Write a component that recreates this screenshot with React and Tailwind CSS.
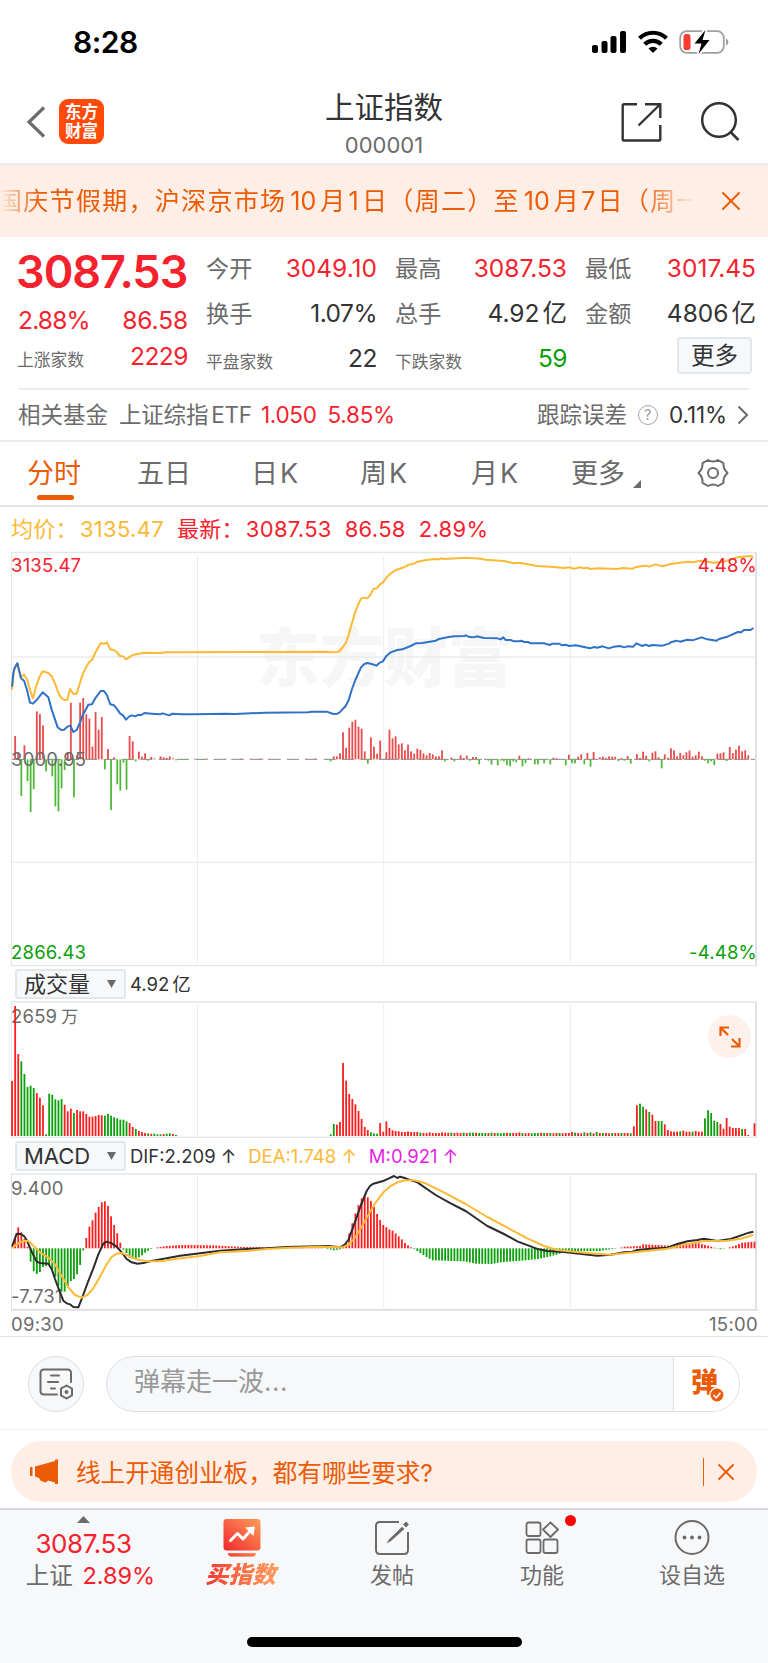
import { X } from 'lucide-react'

const UP = '#fa1e1e'
const DOWN = '#0aa00a'

// minute bars: positive = red, negative = green (units are a third of a pixel)
const MOMENTUM = [
  0, 70, 20, -110, 42, -65, -158, -90, 144, 136, 102, -36, 0, -51, -141, -156, -87, -32, 20, 170,
  -114, 12, 170, 184, 135, 122, 38, 142, 89, 127, -30, 31, -152, 6, -75, -94, -10, -91, 70, 54,
  -6, 23, 8, 18, -4, 7, 3, 0, 9, 6, 4, 9, 3, -3, 0, -2, -2, 0, 0, 2,
  0, 0, -2, 2, 0, 0, 0, 0, 0, 2, 0, -2, 0, 0, 2, 0, 0, 2, 0, 0,
  2, 2, 0, 2, 0, 0, -2, 0, 0, 0, -2, 0, 0, 0, 0, 2, 0, 0, 2, 0,
  0, 0, -2, -6, 9, 9, 18, 81, 35, 95, 113, 119, 98, 92, 24, -13, 66, 38, 17, 56,
  0, 21, 89, 63, 69, 45, 48, 27, 44, 24, 17, 32, 28, 18, 12, 19, 15, 9, 9, 27,
  -6, 0, 5, -6, 0, 12, 4, 11, -4, 7, 7, -15, 0, 0, -4, -16, 0, -18, -4, -6,
  -18, -21, -6, -9, 11, -21, -12, 3, 0, -15, -15, 0, -12, 0, -15, 5, 3, 0, 0, -18,
  14, -12, -12, 8, 15, -15, 19, -22, 22, 0, 6, 8, 4, 9, 8, 8, -5, 3, -4, 10,
  -13, 0, 16, 4, 23, 11, -6, 20, 24, 6, -27, 15, 5, 33, 27, 9, 19, 12, 21, 26,
  8, 12, 23, 9, -4, -12, -6, -17, 17, 18, 21, -5, 37, 19, 29, 41, 24, 27, 12, 0,
]

const VOLUME_OPEN = [
  165, 390, 246, -224, -186, -147, -151, -144, 129, 115, 92, -5, -127, -124, -110, -107, -111, 94, 74, 82,
  -69, 78, 74, 74, 66, 58, 58, 60, 63, 62, -61, -66, -61, -56, -53, -49, -49, -44, 39, 27,
  -21, 15, 12, 9, -8, 7, -7, -5, -5, 6, -7, -8, 6, -3,
]
const VOLUME_NOON = [
  -5, -36, 34, 42, 219, 166, 126, 111, 95, 75, 51, 27, 18, -11, -8, -7, 39, 13, 44, 24,
  17, 15, 14, 12, 12, 14, 12, 12, 12, -10, 9, 9, 11, 9, 9, 9, 11, 10, 10, -10,
  9, 10, 9, -10, 9, -10, -10, 10, -9, -9, -9, 9, -10, 9, -9, -8, -9, 10, -9, 9,
  9, 11, -9, 8, 9, -8, -9, -9, 10, -9, 9, -9, 8, 9, -9, 8, 9, 9, 12, -10,
  9, 8, -11, 9, -11, 8, -12, 9, -9, 9, 8, -9, 9, 9, -9, 9, 9, -8,
]
const VOLUME_CLOSE = [
  29, 92, -97, -88, 80, -72, 64, 45, -45, -45, 35, 18, 14, 13, 13, -14, 16, 13, 13, -13,
  15, 13, 13, -53, -77, -69, -46, -42, 36, 22, 54, 28, 24, 24, 24, -21, 21, 3, 0, 38,
]
const VOLUME = [
  ...VOLUME_OPEN,
  ...Array(103 - VOLUME_OPEN.length).fill(0),
  ...VOLUME_NOON,
  ...VOLUME_CLOSE,
]

const MACD_KEYS = [
  [0, 0], [1, 30], [2, 63], [3, 48], [4, 28], [5, 5], [6, -40], [7, -69], [8, -77], [9, -71], [10, -56], [12, -50],
  [13, -62], [14, -85], [15, -112], [16, -130], [17, -130], [18, -115], [19, -98], [20, -92], [21, -78],
  [22, -50], [23, -6], [24, 31], [25, 65], [26, 84], [27, 107], [28, 124], [29, 138], [30, 141], [31, 127],
  [32, 96], [33, 70], [34, 45], [35, 17], [36, -4], [37, -14], [38, -28], [39, -31], [41, -27], [42, -21],
  [43, -13], [45, -2], [46, 0], [47, 3], [50, 7], [55, 10], [65, 9], [75, 4], [100, 3], [102, -2], [104, -6],
  [106, -3], [107, 5], [108, 18], [109, 45], [110, 75], [111, 105], [112, 130], [113, 150], [114, 155],
  [115, 153], [116, 142], [117, 124], [118, 103], [119, 85], [120, 70], [122, 57], [123, 53], [124, 45],
  [125, 36], [126, 27], [127, 16], [128, 9], [129, 3], [130, -2], [132, -14], [134, -26], [136, -36],
  [146, -39], [150, -46], [155, -47], [158, -42], [166, -36], [170, -32], [174, -24], [178, -14], [181, -10],
  [185, -8], [190, -8], [193, -3], [196, 0], [198, 5], [203, 7], [204, 12], [213, 8], [216, 16], [222, 15],
  [225, 8], [228, -1], [229, -3], [231, 0], [234, 9], [236, 17], [240, 20],
]

function spread(keys) {
  const out = []
  for (let k = 0; k < keys.length - 1; k++) {
    const [a, va] = keys[k]
    const [b, vb] = keys[k + 1]
    for (let i = a; i < b; i++) out.push(va + ((vb - va) * (i - a)) / (b - a))
  }
  return out.concat(keys[keys.length - 1][1])
}
const MACD = spread(MACD_KEYS)

const AVG_LINE = '36,570 42,510 52,490 62,530 72,524 82,540 90,570 99,595 108,560 118,532 128,514 145,519 156,530 166,553 175,578 184,594 193,600 202,599 210,567 220,582 230,581 238,555 248,523 258,502 267,487 276,480 285,460 302,430 314,431 321,427 331,448 341,450 350,456 360,468 369,469 378,478 398,465 412,462 432,458 480,459 500,457 980,455 990,457 1010,456 1018,454 1037,430 1046,405 1055,373 1066,335 1074,315 1083,296 1092,293 1102,295 1111,285 1120,267 1130,265 1139,254 1148,248 1160,232 1172,220 1188,210 1214,201 1226,194 1242,191 1250,186 1274,181 1302,177 1316,178 1322,175 1332,177 1397,173 1442,176 1457,179 1512,183 1542,190 1557,188 1612,198 1652,200 1692,204 1707,202 1722,206 1742,202 1752,205 1762,203 1770,207 1792,205 1852,207 1867,204 1897,206 1912,200 1937,197 1947,200 1967,193 1987,199 2012,192 2062,185 2077,187 2102,182 2142,188 2172,185 2212,172 2252,168 2260,171'
const PRICE_LINE = '36,560 40,520 44,503 52,490 63,535 72,542 81,570 90,608 99,611 110,600 128,577 145,592 156,632 173,682 184,690 192,689 202,680 211,677 220,696 230,690 240,668 247,648 265,614 276,613 285,596 302,573 312,573 321,586 331,613 342,616 352,628 360,640 369,646 378,659 387,650 396,646 405,649 414,645 424,645 433,639 455,641 480,643 488,640 508,646 517,641 545,643 580,643 680,641 705,642 795,638 925,637 935,635 980,635 1000,642 1012,641 1018,638 1037,618 1046,600 1055,570 1066,540 1083,502 1093,492 1102,489 1115,492 1129,497 1139,488 1148,485 1160,467 1172,457 1192,450 1207,448 1232,438 1247,430 1267,429 1307,422 1317,417 1342,412 1362,409 1392,408 1398,406 1407,411 1422,412 1430,409 1452,414 1492,415 1502,418 1510,412 1517,420 1532,420 1542,424 1557,424 1564,422 1572,426 1584,426 1592,430 1632,430 1649,435 1657,431 1677,431 1687,436 1697,434 1707,438 1727,436 1752,441 1770,445 1782,441 1792,443 1807,439 1827,445 1842,440 1860,438 1872,442 1882,439 1900,440 1909,430 1927,438 1937,434 1947,438 1957,435 1987,437 2007,431 2012,427 2030,422 2040,425 2062,419 2077,421 2105,412 2122,418 2150,422 2157,417 2182,410 2214,396 2224,397 2232,390 2252,390 2260,384'
const DIF_LINE = '36,335 50,296 62,297 72,303 80,315 95,350 110,380 120,384 145,386 155,402 165,432 180,472 190,497 200,505 210,508 220,516 235,517 245,492 265,438 280,400 295,358 310,326 320,320 335,325 350,335 365,352 380,372 395,382 412,386 430,384 450,379 500,370 540,362 600,355 660,347 740,342 800,340 860,336 950,334 985,333 1020,337 1033,330 1045,315 1060,275 1083,210 1100,168 1110,153 1120,146 1152,137 1167,130 1182,123 1192,129 1200,125 1217,130 1252,142 1307,180 1352,205 1397,228 1462,273 1512,297 1552,319 1592,334 1612,342 1642,348 1692,351 1752,358 1792,362 1832,359 1872,352 1897,350 1912,345 1952,341 2002,338 2032,327 2062,319 2092,315 2112,311 2152,318 2192,312 2232,298 2247,293 2260,290'
const DEA_LINE = '36,340 50,328 70,317 85,318 100,332 120,352 145,368 165,388 185,423 205,457 225,480 245,488 262,480 280,460 300,425 320,388 335,366 350,356 365,354 385,362 410,373 440,379 480,379 520,373 600,363 660,352 740,348 800,342 870,338 960,335 1025,337 1045,330 1065,308 1085,275 1105,240 1125,205 1152,170 1172,153 1197,140 1217,136 1242,136 1277,145 1327,170 1397,207 1462,246 1522,278 1582,310 1632,333 1672,345 1722,350 1772,355 1832,359 1872,355 1912,351 2002,341 2052,329 2112,318 2182,317 2222,311 2260,300'

function Bars({ data, base, up = UP, down = DOWN, mirrored = true }) {
  return data.map((v, i) =>
    v ? (
      <rect
        key={i}
        x={33.5 + 9.28 * i}
        y={v > 0 || !mirrored ? base - Math.abs(v) : base}
        width="5.4"
        height={Math.abs(v)}
        fill={v > 0 ? up : down}
      />
    ) : null
  )
}

function Frame({ top, bottom }) {
  return (
    <g stroke="#e3e7eb" strokeWidth="3">
      <path d={`M592.5 ${top + 8}V${bottom - 5}M1151 ${top + 8}V${bottom - 5}M1711 ${top + 8}V${bottom - 5}`} stroke="#eaedf0" />
      <path d={`M34.5 ${top}V${bottom}`} />
      <path d={`M33 ${top}H2270M33 ${bottom}H2270`} strokeWidth="4" />
      <path d={`M2268 ${top}V${bottom}`} strokeWidth="6" stroke="#dfe3e8" />
    </g>
  )
}

function StatusBar() {
  return (
    <div className="h-[80px] flex items-center justify-between pl-[73px] pr-[39px] pt-[4px]">
      <span className="text-[30px] leading-none font-semibold tracking-[-0.5px] text-black">8:28</span>
      <svg width="138" height="26" viewBox="0 0 138 26">
        <rect x="1" y="16" width="6" height="8" rx="2" />
        <rect x="10.5" y="12" width="6" height="12" rx="2" />
        <rect x="19.5" y="7" width="6" height="17" rx="2" />
        <rect x="29" y="2" width="6" height="22" rx="2" />
        <g fill="none" stroke="#000" strokeWidth="4.2">
          <path d="M48.5 9.2a19.5 19.5 0 0 1 27 0" />
          <path d="M53.7 15.2a12 12 0 0 1 16.6 0" />
        </g>
        <path d="M57.5 19.5a7 7 0 0 1 9 0L62 24Z" />
        <rect x="89.2" y="2.2" width="43.6" height="21.6" rx="6.5" fill="none" stroke="#a0a0a0" strokeWidth="1.8" />
        <path d="M135 9.5v7q2.5-1 2.5-3.5t-2.5-3.5" fill="#a0a0a0" />
        <rect x="92.5" y="5" width="7" height="16" rx="2.8" fill="#ff3b30" />
        <path d="M114.5 0.5L103.5 14.5H110.5L107.5 25.5L118.5 11H111.5Z" stroke="#fff" strokeWidth="3.5" />
        <path d="M114.5 1L103.5 14.5H110.5L107.5 25L118.5 11H111.5Z" />
      </svg>
    </div>
  )
}

function Header() {
  return (
    <div className="h-[85px] border-b-2 border-[#e9ecee] flex items-start justify-between px-[26px]">
      <div className="flex items-center gap-[13px] pt-[19px] w-[140px]">
        <svg width="20" height="32" viewBox="0 0 20 32" fill="none" stroke="#6b6b6b" strokeWidth="3.2">
          <path d="M18 1.5L3 16L18 30.5" />
        </svg>
        <div className="w-[45px] h-[45px] rounded-[9px] bg-[#ff4a0a] text-white text-[16.5px] leading-[18.5px] font-bold flex flex-col items-center justify-center">
          <span>东方</span>
          <span>财富</span>
        </div>
      </div>
      <div className="text-center pt-[8px]">
        <div className="text-[29.5px] leading-[38px] text-[#333]">上证指数</div>
        <div className="text-[22px] leading-[38px] text-[#6b6b6b]">000001</div>
      </div>
      <div className="w-[140px] flex justify-end gap-[39px] pr-px pt-[21px]">
        <svg width="42" height="42" viewBox="0 0 42 42" fill="none" stroke="#333" strokeWidth="2.4">
          <path d="M17 3.2H4Q2.7 3.2 2.7 4.5V38.2Q2.7 39.5 4 39.5H39Q40.300 39.5 40.3 38.2V24" />
          <path d="M25 3.2H40.3V17M40 3.5L18.5 24.5" />
        </svg>
        <svg width="40" height="42" viewBox="0 0 40 42" fill="none" stroke="#333" strokeWidth="2.5">
          <circle cx="18" cy="19" r="16.8" />
          <path d="M29.5 31L37.5 39" />
        </svg>
      </div>
    </div>
  )
}

function Notice() {
  return (
    <div className="h-[72px] bg-[#feeee5] flex items-center justify-between text-[#ec5b06]">
      <div className="w-[694px] overflow-hidden pt-[2px] [mask-image:linear-gradient(to_right,transparent,black_40px,black_640px,transparent)]">
        <div className="ml-[-3px] text-[25px] tracking-[1.3px] whitespace-nowrap">
          国庆节假期，沪深京市场<span className="tracking-normal ml-[4px] mr-[4px]">10</span>月<span className="mx-[2px]">1</span>日（周二）至
          <span className="tracking-normal ml-[4px] mr-[4px]">10</span>月<span className="mx-px">7</span>日（周一）
        </div>
      </div>
      <X className="w-[32px] h-[32px] mr-[21px]" strokeWidth={1.5} />
    </div>
  )
}

function Cell({ label, value, small, color = 'text-[#333]' }) {
  const decimal = value.includes('.') && !value.includes('%')
  return (
    <div className="h-[45px] flex items-center justify-between whitespace-nowrap">
      <span className={`ml-[-1px] text-[#6b6b6b] ${small ? 'text-[16.8px] pt-[8px]' : 'text-[23.2px] pt-px'}`}>{label}</span>
      <span className={`text-[24.5px] ${decimal || value.includes('亿') ? 'tracking-normal' : 'tracking-[-0.5px]'} ${color}`}>
        {value.replace('亿', '')}
        {value.includes('亿') && <span className="ml-[3px]">亿</span>}
      </span>
    </div>
  )
}

function Quote() {
  return (
    <div className="h-[205px] border-b-2 border-[#e9ecee] pl-[18px] pr-[13px]">
      <div className="h-[151px] grid grid-cols-[170px_170px_171px_170px] gap-x-[19px]">
        <div className="text-[#f5222d] whitespace-nowrap">
          <div className="ml-[-2px] h-[70px] flex items-center text-[45px] font-semibold tracking-[-1px]">3087.53</div>
          <div className="h-[27px] flex items-center justify-between text-[24.5px] tracking-[-0.8px]">
            <span>2.88%</span>
            <span className="tracking-[-0.1px]">86.58</span>
          </div>
          <Cell label="上涨家数" value="2229" small color="text-[#f5222d]" />
        </div>
        <div className="pt-[9px]">
          <Cell label="今开" value="3049.10" color="text-[#f5222d]" />
          <Cell label="换手" value="1.07%" />
          <Cell label="平盘家数" value="22" small />
        </div>
        <div className="pt-[9px]">
          <Cell label="最高" value="3087.53" color="text-[#f5222d]" />
          <Cell label="总手" value="4.92亿" />
          <Cell label="下跌家数" value="59" small color="text-[#0aa00a]" />
        </div>
        <div className="pt-[9px]">
          <Cell label="最低" value="3017.45" color="text-[#f5222d]" />
          <Cell label="金额" value="4806亿" />
          <div className="flex justify-end pr-[4px] pt-px">
            <div className="w-[75px] h-[37px] rounded-[4px] border-2 border-[#e3e7eb] bg-[#f6f8fa] text-[23.5px] leading-[34px] text-center text-[#333]">更多</div>
          </div>
        </div>
      </div>
      <div className="h-[52px] border-t-2 border-[#eceff1] mr-[6px] flex items-center text-[22.5px] text-[#6b6b6b] whitespace-nowrap">
        <span>相关基金</span>
        <span className="ml-[11px] tracking-[-0.2px]">上证综指<span className="ml-[3px]">ETF</span></span>
        <span className="ml-[9px] tracking-[-0.3px] text-[#f5222d]">1.050</span>
        <span className="ml-[11px] tracking-[-0.3px] text-[#f5222d]">5.85%</span>
        <span className="ml-auto">跟踪误差</span>
        <span className="ml-[11px] w-[20px] h-[20px] rounded-full border border-[#a5a5a5] text-[14px] leading-[18px] text-center text-[#999]">?</span>
        <span className="ml-[11px] tracking-[-0.100px] text-[#333]">0.11%</span>
        <svg className="ml-[10px]" width="12" height="20" viewBox="0 0 12 20" fill="none" stroke="#6b6b6b" strokeWidth="2">
          <path d="M1.5 1.5L10 10L1.5 18.5" />
        </svg>
      </div>
    </div>
  )
}

function Tabs() {
  return (
    <div className="h-[65px] border-b-2 border-[#e1e5e9] flex items-start pl-[27px] text-[27px] leading-[64px] text-[#6b6b6b] whitespace-nowrap">
      <div className="w-[110px] text-[#ec5b06]">
        <div className="h-[53px]">分时</div>
        <div className="ml-[10px] w-[37px] h-[5px] rounded-full bg-[#ec5b06]" />
      </div>
      <div className="w-[114px]">五日</div>
      <div className="w-[109px]">日<span className="ml-[2px]">K</span></div>
      <div className="w-[111px]">周<span className="ml-[2px]">K</span></div>
      <div className="w-[100px]">月<span className="ml-[2px]">K</span></div>
      <div className="w-[126px] flex">
        更多
        <svg className="ml-[8px] mt-[38px]" width="8" height="8" viewBox="0 0 8 8" fill="#6b6b6b">
          <path d="M8 0V8H0Z" />
        </svg>
      </div>
      <svg className="mt-[16px]" width="32" height="30" viewBox="0 0 32 30" fill="none" stroke="#6b6b6b" strokeWidth="2" strokeLinejoin="round">
        <path d="M11 2Q16 5 21 2L26.500 5.2Q26 11 30.5 15Q26 19 26.5 24.8L21 28Q16 25 11 28L5.5 24.8Q6 19 1.5 15Q6 11 5.5 5.2Z" />
        <circle cx="16" cy="15" r="5" />
      </svg>
    </div>
  )
}

function PriceChart() {
  return (
    <div className="relative h-[416px]">
      <div className="absolute left-[256px] top-[61px] text-[64px] leading-[92px] font-black text-[#f6f6f6]">东方财富</div>
      <svg className="absolute left-0 top-0" width="768" height="416" viewBox="0 153 2304 1248" fill="none">
        <Frame top={157.5} bottom={1397} />
        <path d="M36 471H2265M36 1087H2265" stroke="#e9ecef" strokeWidth="4" />
        <path d="M36 778H1152" stroke="#8a8a8a" strokeWidth="3" strokeDasharray="36 19" />
        <path d="M1152 778H2265" stroke="#8a8a8a" strokeWidth="3" strokeDasharray="44 6" />
        <Bars data={MOMENTUM} base={778} up="#e84c4c" down="#52b83c" />
        <polyline points={AVG_LINE} stroke="#fcb935" strokeWidth="6" strokeLinejoin="round" />
        <polyline points={PRICE_LINE} stroke="#2f72c8" strokeWidth="6" strokeLinejoin="round" />
      </svg>
      <div className="absolute left-[11px] right-[11px] inset-y-0 text-[18.5px] leading-[24px] tracking-[0.2px]">
        <div className="flex justify-between pt-[2px] text-[#f5222d]">
          <span>3135.47</span>
          <span>4.48%</span>
        </div>
        <div className="pt-[170px] text-[#6b6b6b]">3000.95</div>
        <div className="flex justify-between pt-[169px] text-[#0aa00a]">
          <span>2866.43</span>
          <span>-4.48%</span>
        </div>
      </div>
    </div>
  )
}

function Picker({ children }) {
  return (
    <div className="w-[111px] h-[30px] rounded-[3px] border-2 border-[#e3e7eb] bg-[#f7f8fa] pl-[7px] pr-[8px] flex items-center justify-between text-[22px] leading-none text-[#333]">
      <span>{children}</span>
      <svg width="9" height="8" viewBox="0 0 9 8" fill="#6b6b6b">
        <path d="M0 0H9L4.5 8Z" />
      </svg>
    </div>
  )
}

function VolumeChart() {
  return (
    <div className="relative h-[138px]">
      <div className="absolute left-[11px] top-[3px] text-[18.5px] leading-[24px] tracking-[0.2px] text-[#6b6b6b]">
        2659<span className="ml-[4px] text-[17px]">万</span>
      </div>
      <svg className="absolute left-0 top-0" width="768" height="138" viewBox="0 183 2304 414" fill="none">
        <Frame top={186} bottom={592} />
        <Bars data={VOLUME} base={588} mirrored={false} />
      </svg>
      <div className="absolute left-[708px] top-[14px] w-[43px] h-[43px] rounded-full bg-[#fef0ea] flex items-center justify-center">
        <svg width="22" height="22" viewBox="0 0 22 22" fill="none" stroke="#ec5b06" strokeWidth="2.200">
          <path d="M1.5 10V1.5H10M1.5 1.5L9 9M20.5 12V20.5H12M20.5 20.5L13 13" />
        </svg>
      </div>
    </div>
  )
}

function MacdChart() {
  return (
    <div className="relative h-[140px]">
      <div className="absolute left-[11px] top-[3px] text-[18.5px] leading-[24px] tracking-[0.2px] text-[#6b6b6b]">9.400</div>
      <div className="absolute left-[11px] top-[111px] text-[18.5px] leading-[24px] tracking-[0.2px] text-[#6b6b6b]">-7.731</div>
      <svg className="absolute left-0 top-0" width="768" height="140" viewBox="0 114 2304 420" fill="none">
        <Frame top={117} bottom={524} />
        <path d="M33 524.5H2276" stroke="#d5dadf" strokeWidth="4" />
        <Bars data={MACD} base={340} />
        <polyline points={DIF_LINE} stroke="#2b2b2b" strokeWidth="6" strokeLinejoin="round" />
        <polyline points={DEA_LINE} stroke="#fcb935" strokeWidth="6" strokeLinejoin="round" />
      </svg>
    </div>
  )
}

function Charts() {
  return (
    <div>
      <div className="h-[44px] pl-[11px] pt-px flex items-center text-[22px] tracking-[0.3px] whitespace-nowrap text-[#f5222d]">
        <span className="text-[#fcb935]">均价：</span>
        <span className="ml-[2px] text-[#fcb935]">3135.47</span>
        <span className="ml-[13px]">最新：</span>
        <span className="ml-[2px]">3087.53</span>
        <span className="ml-[13px]">86.58</span>
        <span className="ml-[13px]">2.89%</span>
      </div>
      <PriceChart />
      <div className="h-[34px] pl-[15px] flex items-center">
        <Picker>成交量</Picker>
        <span className="ml-[4px] pt-[2px] text-[18.5px] text-[#333]">4.92<span className="ml-[3px]">亿</span></span>
      </div>
      <VolumeChart />
      <div className="h-[34px] pl-[15px] flex items-center text-[18.5px] whitespace-nowrap">
        <Picker>MACD</Picker>
        <span className="ml-[4px] pt-px text-[#333]">DIF:2.209 ↑</span>
        <span className="ml-[12px] pt-px text-[#fcb935]">DEA:1.748 ↑</span>
        <span className="ml-[12px] pt-px text-[#e61ee6]">M:0.921 ↑</span>
      </div>
      <MacdChart />
      <div className="h-[24px] border-b border-[#e3e3e3] flex justify-between pl-[11px] pr-[10px] text-[18.5px] leading-[23px] tracking-[0.3px] text-[#6b6b6b]">
        <span>09:30</span>
        <span>15:00</span>
      </div>
    </div>
  )
}

function CommentBar() {
  return (
    <div className="h-[93px] border-b border-[#eef0f2] flex items-center pt-px pl-[28px] pr-[28px]">
      <div className="w-[56px] h-[56px] rounded-full border border-[#dadfe4] bg-[#f7f8fa] flex items-center justify-center">
        <svg width="34" height="32" viewBox="0 0 34 32" fill="none" stroke="#6b6b6b" strokeWidth="2" strokeLinecap="round">
          <path d="M18 26.5H5Q1.5 26.5 1.5 23V5Q1.5 1.5 5 1.5H28.5Q32 1.5 32 5V14" />
          <path d="M12 7.5H20M9 14H19M12 20.5H16" />
          <path d="M27.5 17.5L33 20.7V27.3L27.5 30.5L22 27.3V20.7Z" strokeLinejoin="round" />
          <circle cx="27.5" cy="24" r="1" fill="#6b6b6b" />
        </svg>
      </div>
      <div className="ml-[22px] flex-1 h-[56px] rounded-full border border-[#dadfe4] bg-[#f7f8fa] overflow-hidden flex">
        <div className="flex-1 pl-[27px] text-[26px] leading-[50px] text-[#999]">弹幕走一波<span className="tracking-[0.500px]">...</span></div>
        <div className="w-[66px] border-l border-[#dadfe4] bg-white relative">
          <span className="absolute left-[17px] top-[10px] text-[27px] leading-[32px] font-black text-[#ec5b06]">弹</span>
          <svg className="absolute left-[35px] top-[30px]" width="16" height="16" viewBox="0 0 16 16" fill="none">
            <circle cx="8" cy="8" r="7.2" fill="#ec5b06" stroke="#fff" strokeWidth="1.4" />
            <path d="M4.5 8L7.2 10.7L11.5 5.7" stroke="#fff" strokeWidth="1.6" />
          </svg>
        </div>
      </div>
    </div>
  )
}

function Promo() {
  return (
    <div className="h-[78px] pt-[11px] px-[11px]">
      <div className="h-[61px] rounded-[31px] bg-[#feeee5] text-[#ec5b06] flex items-center pl-[18px] pr-[17px]">
        <svg width="30" height="26" viewBox="0 0 30 26" fill="#ec5b06">
          <path d="M1 8H3.5V17H1ZM6 7.5L26 2V0.5H29V25H26V23.5L19 21.5L17 23.5L12 22L10 19L6 17.5Z" />
        </svg>
        <span className="ml-[17px] pt-[3px] text-[24.6px]">线上开通创业板，都有哪些要求?</span>
        <span className="ml-auto w-px h-[28px] bg-[#ec5b06]" />
        <X className="ml-[8px] w-[28px] h-[28px]" strokeWidth={1.6} />
      </div>
    </div>
  )
}

function NavItem({ label, children }) {
  return (
    <div className="w-[150px] flex flex-col items-center">
      <div className="h-[54px] pt-[10px]">{children}</div>
      <div className="text-[22px] leading-[22px]">{label}</div>
    </div>
  )
}

function BottomNav() {
  return (
    <div className="h-[155px] bg-[#f7f8fa] border-t-2 border-[#d5d9de] text-[#6b6b6b] flex flex-col justify-between">
      <div className="flex">
        <div className="w-[167px] flex flex-col items-center pt-[6px] whitespace-nowrap">
          <svg width="13" height="7" viewBox="0 0 13 7" fill="#6b6b6b">
            <path d="M6.5 0L13 7H0Z" />
          </svg>
          <div className="mt-[3px] text-[26px] leading-[36px] tracking-[-0.400px] text-[#f5222d]">3087.53</div>
          <div className="mr-[-14px] text-[23.5px] leading-[28px]">
            上证 <span className="ml-[3px] tracking-normal text-[#f5222d]">2.89%</span>
          </div>
        </div>
        <div className="w-[150px] flex flex-col items-center">
          <div className="h-[53px] pt-[9px]">
            <svg width="38" height="38" viewBox="0 0 38 38" fill="none">
              <defs>
                <linearGradient id="hot" x1="0" y1="1" x2="1" y2="0">
                  <stop offset="0" stopColor="#f0282d" />
                  <stop offset="1" stopColor="#ff9d5c" />
                </linearGradient>
              </defs>
              <rect x="0.5" y="0" width="37" height="31.5" rx="3" fill="url(#hot)" />
              <path d="M5 34H33Q33 37.5 29.5 37.5H8.5Q5 37.5 5 34Z" fill="url(#hot)" />
              <path d="M7.5 21.5L14.5 14.5L20 20L28 11" stroke="#fff" strokeWidth="3" strokeLinecap="round" strokeLinejoin="round" />
              <path d="M22 8.5L32 7.5L30.5 17Z" fill="#fff" />
            </svg>
          </div>
          <div className="ml-[-3px] px-1 text-[23.5px] leading-[24px] font-black italic bg-linear-to-r from-[#f0282d] to-[#ff9d5c] bg-clip-text text-transparent">买指数</div>
        </div>
        <NavItem label="发帖">
          <svg width="36" height="36" viewBox="0 0 36 36" fill="none" stroke="#6b6b6b" strokeWidth="2">
            <path d="M25 2H6Q2 2 2 6V30Q2 34 6 34H30Q34 34 34 30V12" />
            <path d="M12.5 23.5L15 19.5L28 6.8L30.5 9L17 21Z" fill="#6b6b6b" stroke="none" />
            <path d="M30.5 6L33.5 3" strokeWidth="4" />
          </svg>
        </NavItem>
        <NavItem label="功能">
          <div className="relative">
            <svg width="34" height="36" viewBox="0 0 34 36" fill="none" stroke="#6b6b6b" strokeWidth="1.8">
              <rect x="1.5" y="2.5" width="14" height="13.5" rx="2" />
              <rect x="1.5" y="19.5" width="14" height="13.5" rx="2" />
              <rect x="18.5" y="19.5" width="14" height="13.5" rx="2" />
              <path d="M25.5 2.5L33 9.5L25.5 17L18 9.5Z" strokeLinejoin="round" />
            </svg>
            <span className="absolute left-[40px] top-[-5px] w-[11px] h-[11px] rounded-full bg-[#ff0000]" />
          </div>
        </NavItem>
        <NavItem label="设自选">
          <svg width="36" height="36" viewBox="0 0 36 36" fill="none" stroke="#6b6b6b" strokeWidth="2">
            <circle cx="18" cy="17.5" r="16.5" />
            <g fill="#6b6b6b" stroke="none">
              <circle cx="10.5" cy="17.5" r="1.9" />
              <circle cx="18" cy="17.5" r="1.9" />
              <circle cx="25.5" cy="17.5" r="1.9" />
            </g>
          </svg>
        </NavItem>
      </div>
      <div className="mx-auto mb-[16px] w-[275px] h-[10px] rounded-full bg-black" />
    </div>
  )
}

export default function App() {
  return (
    <div className="w-[768px] h-[1663px] overflow-hidden bg-white font-['Inter','Noto_Sans_CJK_SC',sans-serif]">
      <StatusBar />
      <Header />
      <Notice />
      <Quote />
      <Tabs />
      <Charts />
      <CommentBar />
      <Promo />
      <BottomNav />
    </div>
  )
}
